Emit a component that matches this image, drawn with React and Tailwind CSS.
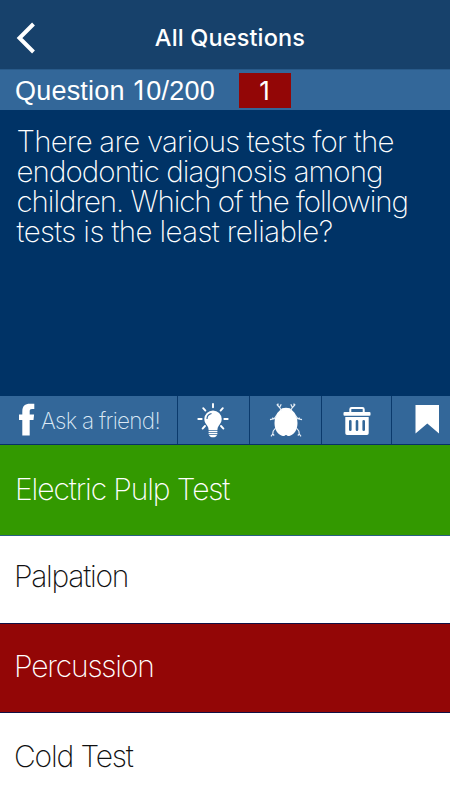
const thin = "font-['Inter','Liberation_Sans',sans-serif] font-extralight whitespace-nowrap";

function BulbIcon() {
  return (
    <svg className="mr-[2px]" width="34" height="36" viewBox="0 0 34 36" fill="none">
      <g stroke="#fff" strokeWidth="1.9" strokeLinecap="round">
        <path d="M17 2v3.200M7.200 6.200l2.200 2.400M26.800 6.200l-2.200 2.400M2.300 17h3.400M28.300 17h3.400M6.600 26.600l2.400-2.600M27.400 26.600L25 24" />
      </g>
      <path d="M17 8.400a8.700 8.700 0 0 0-8.700 8.700c0 3.200 1.700 5.100 3.100 6.900.8 1.100 1.200 2.500 1.200 4h8.800c0-1.500.4-2.900 1.200-4 1.400-1.800 3.100-3.700 3.100-6.900A8.700 8.700 0 0 0 17 8.400z" fill="#fff" />
      <path d="M11 17c0-2.800 1.700-4.900 4.500-5.500" stroke="#336799" strokeWidth="1.200" />
      <path d="M12.600 29.300h8.800M12.600 31.500h8.800" stroke="#fff" strokeWidth="1.300" />
      <path d="M13 32.900h8c-.5 1.500-2 2.300-4 2.300s-3.500-.8-4-2.300z" fill="#fff" />
    </svg>
  );
}

function BeetleIcon() {
  return (
    <svg className="ml-[1px]" width="34" height="36" viewBox="0 0 34 36" fill="none">
      <path d="M17 5.800c2.900 0 5 .7 6.300 2.700 3.300 2.500 5.200 6.700 5.200 12.500 0 6.500-2.900 11.300-7.500 12.800-1.600.5-2.900.4-3.600-.8h-.8c-.7 1.200-2 1.300-3.600.8-4.600-1.500-7.500-6.300-7.500-12.800 0-5.800 1.900-10 5.200-12.500 1.300-2 3.400-2.700 6.300-2.700z" fill="#fff" />
      <g stroke="#e6eef6" strokeWidth="1.200" strokeLinejoin="round">
        <path d="M12.500 8.500L10.600 5.500 9 3.800V1.500M10.600 5.500l1.600-3.200M9 3.800L7.800 2.300M21.500 8.500L23.400 5.500 25 3.800V1.500M23.400 5.500l-1.600-3.200M25 3.800l1.200-1.500" />
        <path d="M7.600 13.500L5.200 16.600 1 17.600M5.200 16.600L3 16M26.400 13.500l2.400 3.100 4.200 1M28.800 16.600L31 16M6.600 26l-2.400 3-.5 3-1.700 2.300M3.700 32l1.500 1.500M27.400 26l2.400 3 .5 3 1.700 2.300M30.300 32l-1.500 1.500" />
      </g>
    </svg>
  );
}

function TrashIcon() {
  return (
    <svg width="28" height="30" viewBox="0 0 28 30" fill="none">
      <path d="M7.300 7V3.300Q7.300 2 8.600 2h10.800q1.300 0 1.300 1.300V7" stroke="#fff" strokeWidth="2" />
      <rect x=".5" y="6" width="27" height="3.800" rx="1" fill="#fff" />
      <path fillRule="evenodd" d="M2.300 11h23.400v16.300q0 1.700-1.700 1.700H4q-1.700 0-1.700-1.700zM6 15.300v8.400q0 1.300 1.300 1.300t1.300-1.300v-8.400q0-1.300-1.300-1.300T6 15.300zm6.700 0v8.400q0 1.300 1.300 1.300t1.300-1.300v-8.400Q15.300 14 14 14t-1.300 1.300zm6.700 0v8.400q0 1.300 1.300 1.300t1.300-1.300v-8.400q0-1.300-1.300-1.300t-1.300 1.300z" fill="#fff" />
    </svg>
  );
}

export default function App() {
  return (
    <div className="flex h-[800px] w-[450px] flex-col overflow-hidden bg-[#003366] text-white">
      <header className="grid h-[69px] shrink-0 grid-cols-[60px_1fr_50px] items-center bg-[#17416b] pt-[6px]">
        <svg className="ml-[15px]" width="20" height="32" viewBox="0 0 20 32" fill="none">
          <path d="M18.500 2L4.500 16l14 14" stroke="#fff" strokeWidth="4" />
        </svg>
        <h1 className="text-center font-['Inter','Liberation_Sans',sans-serif] text-[23.500px] leading-7 font-medium tracking-[0.150px] whitespace-nowrap">All Questions</h1>
      </header>
      <div className="flex h-[41px] shrink-0 items-center border-t border-[#295a89] bg-[#336799] pl-[15px]">
        <span className="w-[224px] font-['Liberation_Sans',sans-serif] text-[27px] leading-8 tracking-[0.200px] whitespace-nowrap">
          Question <span className="mr-[2px] ml-px font-['Inter',sans-serif] text-[26.500px] font-normal">1</span>0/200
        </span>
        <span className="flex h-[35px] w-[52px] items-center justify-center bg-[#930606] pr-[1px] font-['Inter','Liberation_Sans',sans-serif] text-[26px] font-normal">1</span>
      </div>
      <main className={`${thin} h-[286px] shrink-0 pt-[16px] pl-[16.500px] text-[29.500px] leading-[30px]`}>
        <p className="tracking-[-0.800px]">There are various tests for the</p>
        <p className="tracking-[-0.930px]">endodontic diagnosis among</p>
        <p className="tracking-[-1.050px]">children. Which of the following</p>
        <p className="tracking-[-0.600px]">tests is the least reliable?</p>
      </main>
      <nav className="flex h-[48px] shrink-0 gap-px bg-[#0b3a6c]">
        <button className="flex w-[177px] items-center bg-[#336799] pl-[19px]">
          <svg className="mb-[2px]" width="16" height="33" viewBox="0 0 16 33">
            <path d="M3.300 32.500V17H0v-5.500h3.300V8.500C3.300 3 6 .8 11 .8h4.300V6H13c-1.700 0-2.300.7-2.300 2.200v3.300h4.400l-.6 5.500h-3.800v15.500z" fill="#fff" />
          </svg>
          <span className={`${thin} mt-[2px] ml-[6px] text-[22.500px] tracking-[-0.700px] text-[#dce9f5]`}>Ask a friend!</span>
        </button>
        <button className="flex w-[71px] items-center justify-center bg-[#336799]"><BulbIcon /></button>
        <button className="flex w-[71px] items-center justify-center bg-[#336799]"><BeetleIcon /></button>
        <button className="flex w-[69px] items-center justify-center bg-[#336799] pt-[2px]"><TrashIcon /></button>
        <button className="flex flex-1 items-center bg-[#336799] pb-[1px] pl-[23px]">
          <svg width="25" height="29" viewBox="0 0 25 29"><path d="M.5 0H24V28.500L12.300 18.500.5 28.500z" fill="#fff" /></svg>
        </button>
      </nav>
      <div className={`${thin} flex flex-1 flex-col text-[30px]`}>
        <button className="flex h-[92px] shrink-0 items-center border-t border-b border-t-[#073166] border-b-[#286080] bg-[#339900] pb-[2px] pl-[15px] tracking-[-1.100px]">Electric Pulp Test</button>
        <button className="flex h-[87px] shrink-0 items-center bg-white pb-[6px] pl-[14px] tracking-[-1.280px] text-[#111]">Palpation</button>
        <button className="flex h-[90px] shrink-0 items-center border-y border-[#101044] bg-[#930606] pb-[3px] pl-[14px] tracking-[-1.200px]">Percussion</button>
        <button className="flex h-[87px] shrink-0 items-center bg-white pl-[14px] tracking-[-1.170px] text-[#111]">Cold Test</button>
      </div>
    </div>
  );
}
